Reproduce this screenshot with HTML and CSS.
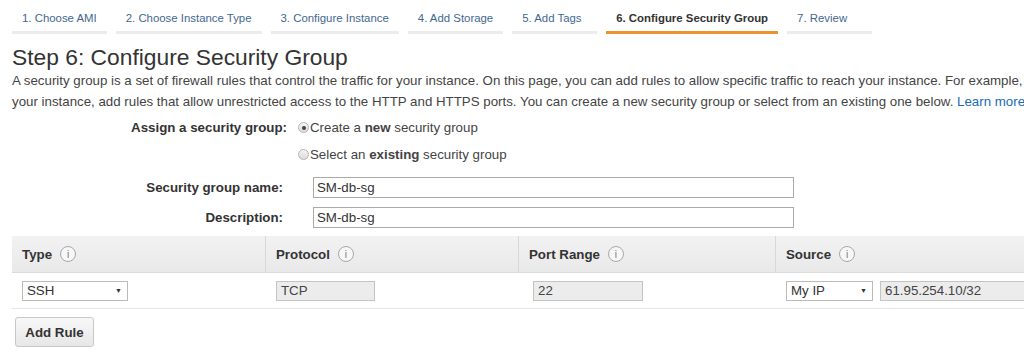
FILE: index.html
```html
<!DOCTYPE html>
<html lang="en">
<head>
    <meta charset="UTF-8">
    <title>Step 6: Configure Security Group</title>
    <link rel="stylesheet" href="styles.css">
</head>
<body>
    <nav class="pasos">
        <span class="paso">1. Choose AMI</span>
        <span class="paso">2. Choose Instance Type</span>
        <span class="paso">3. Configure Instance</span>
        <span class="paso">4. Add Storage</span>
        <span class="paso">5. Add Tags</span>
        <span class="paso activo">6. Configure Security Group</span>
        <span class="paso">7. Review</span>
    </nav>

    <h1>Step 6: Configure Security Group</h1>
    <p class="intro">
        <span class="linea">A security group is a set of firewall rules that control the traffic for your instance. On this page, you can add rules to allow specific traffic to reach your instance. For example,</span>
        <span class="linea">your instance, add rules that allow unrestricted access to the HTTP and HTTPS ports. You can create a new security group or select from an existing one below. <a href="#">Learn more</a></span>
    </p>

    <div class="formulario">
        <div class="fila-radio">
            <span class="etiqueta etiqueta-asignar">Assign a security group:</span>
            <span class="radio marcado"></span>
            <span>Create a <b>new</b> security group</span>
        </div>
        <div class="fila-radio">
            <span class="etiqueta etiqueta-asignar"></span>
            <span class="radio"></span>
            <span>Select an <b>existing</b> security group</span>
        </div>
        <div class="fila-campo">
            <span class="etiqueta">Security group name:</span>
            <input type="text" class="campo" value="SM-db-sg">
        </div>
        <div class="fila-campo">
            <span class="etiqueta">Description:</span>
            <input type="text" class="campo" value="SM-db-sg">
        </div>
    </div>

    <div class="reglas">
        <div class="cabecera">
            <div class="col">Type <span class="info">i</span></div>
            <div class="col sep">Protocol <span class="info">i</span></div>
            <div class="col sep">Port Range <span class="info">i</span></div>
            <div class="col sep">Source <span class="info">i</span></div>
        </div>
        <div class="regla">
            <div class="col"><span class="selector selector-tipo">SSH<span class="flecha">&#9660;</span></span></div>
            <div class="col"><span class="fijo fijo-protocolo">TCP</span></div>
            <div class="col"><span class="fijo fijo-puerto">22</span></div>
            <div class="col origen">
                <span class="selector selector-origen">My IP<span class="flecha">&#9660;</span></span>
                <span class="fijo fijo-ip">61.95.254.10/32</span>
            </div>
        </div>
    </div>

    <button class="boton">Add Rule</button>
</body>
</html>
```

FILE: styles.css
```css
body {
    margin: 0;
    font-family: "Liberation Sans", Arial, sans-serif;
    color: #333;
    background-color: #fff;
    overflow: hidden;
}

.pasos {
    display: flex;
    gap: 9px;
    padding-left: 12px;
}

.paso {
    font-size: 11.4px;
    line-height: 14px;
    padding: 11px 10px 6px;
    min-width: 85px;
    box-sizing: border-box;
    color: #3f6890;
    border-bottom: 3px solid #ececec;
}

.paso.activo {
    font-weight: bold;
    color: #333;
    border-bottom-color: #ec9330;
}

h1 {
    font-size: 22.8px;
    font-weight: normal;
    line-height: 25px;
    margin: 11px 0 0 12px;
    color: #333;
}

.intro {
    margin: 0 0 0 12px;
    font-size: 13.3px;
    line-height: 21px;
    color: #444;
}

.linea {
    display: block;
    white-space: nowrap;
}

.intro a {
    color: #1a6cb3;
    text-decoration: none;
}

.formulario {
    font-size: 13.3px;
    margin-top: 2px;
}

.etiqueta {
    display: inline-block;
    width: 283px;
    text-align: right;
    font-weight: bold;
    color: #333;
}

.etiqueta-asignar {
    width: 287px;
    margin-right: 11px;
}

.fila-radio {
    display: flex;
    align-items: center;
    height: 27px;
    color: #444;
}

.radio {
    width: 9px;
    height: 9px;
    border: 1px solid #b5b5b5;
    border-radius: 50%;
    background: linear-gradient(#f4f4f4, #dcdcdc);
    margin-right: 1px;
    display: flex;
    align-items: center;
    justify-content: center;
}

.radio.marcado::after {
    content: "";
    width: 4px;
    height: 4px;
    border-radius: 50%;
    background-color: #444;
}

.fila-campo {
    display: flex;
    align-items: center;
    height: 30px;
}

.fila-radio + .fila-campo {
    margin-top: 4px;
}

.campo {
    margin-left: 30px;
    width: 481px;
    height: 21px;
    box-sizing: border-box;
    border: 1px solid #aaa;
    padding: 0 3px;
    font-family: inherit;
    font-size: 13.3px;
    color: #333;
}

.reglas {
    margin: 4px 0 0 12px;
    font-size: 13.3px;
}

.cabecera,
.regla {
    display: grid;
    grid-template-columns: 253px 253px 257px 1fr;
}

.cabecera {
    height: 36px;
    background: linear-gradient(#f2f2f2, #e9e9e9);
    border-bottom: 1px solid #dcdcdc;
    font-weight: bold;
    align-items: center;
}

.cabecera .col {
    padding-left: 10px;
    display: flex;
    align-items: center;
    height: 100%;
    box-sizing: border-box;
}

.cabecera .sep {
    border-left: 1px solid #d8d8d8;
    background-clip: padding-box;
}

.info {
    display: inline-flex;
    align-items: center;
    justify-content: center;
    width: 14px;
    height: 14px;
    margin-left: 8px;
    border: 1px solid #a8a8a8;
    border-radius: 50%;
    font-size: 10px;
    font-weight: normal;
    color: #777;
    background-color: #f7f7f7;
}

.regla {
    height: 35px;
    border-bottom: 1px solid #e6e6e6;
    align-items: center;
}

.regla .col {
    padding-left: 10px;
}

.regla .col:nth-child(2),
.regla .col:nth-child(4) {
    padding-left: 11px;
}

.regla .col:nth-child(3) {
    padding-left: 15px;
}

.origen {
    display: flex;
    gap: 7px;
}

.selector,
.fijo {
    display: inline-flex;
    align-items: center;
    height: 20px;
    box-sizing: border-box;
    padding: 0 4px;
    font-size: 13.3px;
    color: #333;
}

.selector {
    justify-content: space-between;
    border: 1px solid #bbb;
    background-color: #fff;
}

.flecha {
    font-size: 7px;
    color: #333;
    margin-right: 1px;
}

.selector-tipo {
    width: 106px;
}

.selector-origen {
    width: 87px;
}

.fijo {
    border: 1px solid #c4c4c4;
    background-color: #ececec;
    color: #444;
}

.fijo-protocolo {
    width: 99px;
}

.fijo-puerto {
    width: 110px;
}

.fijo-ip {
    width: 200px;
}

.boton {
    margin: 8px 0 0 15px;
    width: 79px;
    height: 30px;
    border: 1px solid #c8c8c8;
    border-radius: 3px;
    background: linear-gradient(#f8f8f8, #e7e7e7);
    font-family: inherit;
    font-size: 13.3px;
    font-weight: bold;
    color: #333;
    cursor: pointer;
}
```
